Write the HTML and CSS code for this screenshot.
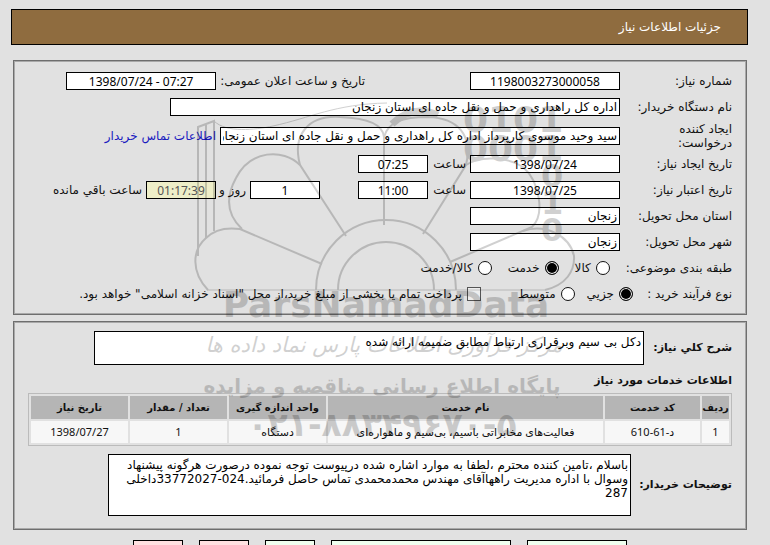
FILE: index.html
```html
<!DOCTYPE html>
<html lang="fa" dir="rtl">
<head>
<meta charset="utf-8">
<title>جزئیات اطلاعات نیاز</title>
<link rel="stylesheet" href="styles.css">
</head>
<body>
<header class="title-bar"><h1>جزئیات اطلاعات نیاز</h1></header>
<main>
<svg class="watermark" viewBox="190 90 390 355" aria-hidden="true">
  <g fill="none" stroke="#000" stroke-width="2">
    <path d="M198 256V127L214 121V231M206 238V125"/>
    <path stroke-width="1" d="M214 121C226 133 255 130 273 126C310 118 335 104 387 103M207 290H545"/>
    <path d="M208 290C191 272 192 250 206 238Q218 226 240 229L322 264"/>
    <path d="M346 236L300 165C283 148 250 150 236 178C224 200 228 216 242 229"/>
    <path d="M300 165C292 135 308 115 340 117C365 118 383 123 384 137V225"/>
    <path d="M384 137C388 122 402 117 428 117C458 118 473 135 466 165L423 234"/>
    <path d="M466 165C480 155 508 157 523 167C540 182 545 215 532 227L450 262"/>
    <path d="M523 231C545 223 570 236 574 256C575 271 566 285 545 290"/>
    <path d="M316 290A70 70 0 0 1 456 290M338 290A48 48 0 0 1 434 290"/>
    <path stroke-width="7" d="M392 124Q412 104 438 115"/>
  </g>
  <g direction="ltr" class="mark-bold">
    <text x="463" y="132" font-size="36">0101</text>
    <text x="463" y="161" font-size="36">0001</text>
    <text x="541" y="187" font-size="32">0</text>
    <text x="541" y="214" font-size="32">1</text>
    <text x="541" y="241" font-size="32">0</text>
    <text x="386" y="317" font-size="36" text-anchor="middle">ParsNamadData</text>
  </g>
  <g direction="rtl" text-anchor="middle">
    <text x="384" y="352" font-size="21" class="mark-script">مرکز فرآوری اطلاعات پارس نماد داده ها</text>
    <text x="382" y="393" font-size="20" class="mark-bold">پایگاه اطلاع رسانی مناقصه و مزایده</text>
    <text x="382" y="436" font-size="33" class="mark-bold" direction="ltr">۰۲۱-۸۸۳۴۹۶۷۰-۵</text>
  </g>
</svg>
<fieldset class="panel need">
  <div class="row"><label class="name" for="num">شماره نیاز:</label><input id="num" class="box wide" value="1198003273000058"><label class="announce" for="ann">تاریخ و ساعت اعلان عمومی:</label><input id="ann" class="box wide" value="1398/07/24 - 07:27" dir="ltr"></div>
  <div class="row"><label class="name" for="org">نام دستگاه خریدار:</label><input id="org" class="box text org" value="اداره کل راهداری و حمل و نقل جاده ای استان زنجان"></div>
  <div class="row tall"><label class="name" for="creator">ایجاد کننده درخواست:</label><input id="creator" class="box text creator" value="سید وحید موسوی کارپرداز اداره کل راهداری و حمل و نقل جاده ای استان زنجان"><a href="#">اطلاعات تماس خریدار</a></div>
  <div class="row"><label class="name" for="cd">تاریخ ایجاد نیاز:</label><input id="cd" class="box wide" value="1398/07/24"><label class="hour" for="ct">ساعت</label><input id="ct" class="box small" value="07:25"></div>
  <div class="row"><label class="name" for="ed">تاریخ اعتبار نیاز:</label><input id="ed" class="box wide" value="1398/07/25"><label class="hour" for="et">ساعت</label><input id="et" class="box small" value="11:00"><input id="days" class="box small days" value="1"><label class="day" for="days">روز و</label><input id="left" class="box small left" value="01:17:39"><label for="left">ساعت باقي مانده</label></div>
  <div class="row"><label class="name" for="prov">استان محل تحویل:</label><input id="prov" class="box text wide" value="زنجان"></div>
  <div class="row"><label class="name" for="city">شهر محل تحویل:</label><input id="city" class="box text wide" value="زنجان"></div>
  <div class="row options"><span class="caption">طبقه بندی موضوعی:</span><label class="choice"><input type="radio" name="kind">کالا</label><label class="choice"><input type="radio" name="kind" checked>خدمت</label><label class="choice"><input type="radio" name="kind">کالا/خدمت</label></div>
  <div class="row options process"><span class="caption">نوع فرآیند خرید :</span><label class="choice"><input type="radio" name="size" checked>جزيي</label><label class="choice"><input type="radio" name="size">متوسط</label><label class="choice treasury"><input type="checkbox">پرداخت تمام یا بخشی از مبلغ خرید،از محل "اسناد خزانه اسلامی" خواهد بود.</label></div>
</fieldset>
<fieldset class="panel details">
  <div class="area-row"><label for="desc">شرح کلي نیاز:</label><textarea id="desc" class="desc">دکل بی سیم وبرقراری ارتباط مطابق ضمیمه ارائه شده</textarea></div>
  <h2>اطلاعات خدمات مورد نیاز</h2>
  <table>
    <colgroup><col class="c1"><col class="c2"><col><col class="c4"><col class="c4"><col class="c4"></colgroup>
    <thead><tr><th>ردیف</th><th>کد خدمت</th><th>نام خدمت</th><th>واحد اندازه گیری</th><th>تعداد / مقدار</th><th>تاریخ نیاز</th></tr></thead>
    <tbody><tr><td>1</td><td>د-61-610</td><td>فعالیت‌های مخابراتی باسیم، بی‌سیم و ماهواره‌ای</td><td>دستگاه</td><td>1</td><td>1398/07/27</td></tr></tbody>
  </table>
  <div class="area-row"><label class="notes-label" for="notes">توضیحات خریدار:</label><textarea id="notes" class="notes">باسلام ،تامین کننده محترم ،لطفا به موارد اشاره شده درپیوست توجه نموده درصورت هرگونه پیشنهاد وسوال با اداره مدیریت راههاآقای مهندس محمدمحمدی تماس حاصل فرمائید.024-33772027داخلی 287</textarea></div>
</fieldset>
<div class="actions"><button class="go"></button><button class="go long"></button><button class="go short"></button><button class="stop"></button><button class="stop"></button></div>
</main>
</body>
</html>
```
FILE: styles.css
```css
* { box-sizing: border-box; }
html { overflow: hidden; }
body { margin: 9px 22px 0 11px; background: #e1e1e1; color: #111; font: 12px/14px "DejaVu Sans", sans-serif; }
input, textarea, button { font: inherit; color: #000; }
.title-bar { height: 36px; border: 1px solid #000; background: #8f6c3f; display: flex; align-items: center; padding: 0 26px; }
h1 { margin: 0; font-size: 12px; font-weight: normal; color: #fff; }
main { position: relative; padding: 15px 1px 0 2px; }
.panel { margin: 0 0 6px; border: 1px solid #6e6e6e; box-shadow: inset 0 0 0 1px #a9a9a9; min-width: 0; }
.need { padding: 7px 14px 8px 9px; }
.row { display: flex; align-items: center; min-height: 26px; white-space: nowrap; gap: 4px; }
.row.tall { min-height: 31px; }
.name { width: 108px; }
.tall .name { white-space: normal; padding-left: 30px; }
.box { height: 18px; border: 1px solid #000; border-radius: 0; background: #fff; padding: 0 2px; text-align: center; min-width: 0; font-family: "Noto Sans", "DejaVu Sans", sans-serif; }
.text { text-align: right; font-family: "DejaVu Sans", sans-serif; }
.wide { width: 150px; }
.org { width: 450px; }
.creator { width: 400px; }
.small { width: 70px; }
.hour { width: 34px; }
.announce { margin-right: 101px; }
.days { margin-right: 34px; }
.day { width: 26px; }
.left { background: #eeeec8; color: #555; }
a { color: #1a1abf; text-decoration: none; }
.options { gap: 16px; }
.process { min-height: 25px; gap: 12px; }
.process .caption { width: 87px; }
.treasury { margin-right: 25px; }
.choice { display: flex; align-items: center; gap: 5px; }
.choice input { appearance: none; width: 14px; height: 14px; margin: 0; background: #fff; border: 1px solid #111; }
.choice input[type="radio"] { border-radius: 50%; }
.choice input:checked { background: #000; box-shadow: inset 0 0 0 1px #fff; }
.choice input[type="checkbox"] { border-color: #555; background: #eee; }
.details { padding: 9px 14px 13px 14px; }
.area-row { display: flex; align-items: center; font-weight: bold; font-size: 11px; }
.area-row label { width: 88px; }
.area-row .notes-label { width: 101px; }
textarea { display: block; resize: none; overflow: hidden; border: 1px solid #000; border-radius: 0; background: #fff; padding: 3px 2px; font-weight: normal; font-size: 12px; }
.desc { width: 550px; height: 34px; }
.notes { width: 523px; height: 62px; }
h2 { margin: 9px 0 5px; font-size: 11px; line-height: 14px; }
table { width: 100%; table-layout: fixed; border: 1px solid #bbb; border-collapse: separate; border-spacing: 2px; text-align: center; margin-bottom: 8px; }
th, td { padding: 0; height: 23px; white-space: nowrap; }
th { background: #b5b5b5; font-size: 10px; }
td { background: #f7f7f7; height: 22px; font-family: "Noto Sans", "DejaVu Sans", sans-serif; font-size: 11px; line-height: 14px; }
.c1 { width: 27px; }
.c2 { width: 95px; }
.c4 { width: 97px; }
.actions { display: flex; gap: 16px; margin-top: 10px; padding-right: 120px; }
button { width: 50px; height: 26px; padding: 0; border: 1px solid #000; border-radius: 0; }
.go { width: 100px; background: #efffef; }
.long { width: 180px; }
.short { width: 50px; }
.stop { background: #ffe1e1; }
.watermark { position: absolute; left: 179px; top: 45px; width: 390px; height: 355px; z-index: 2; opacity: .18; pointer-events: none; overflow: visible; }
.mark-script { font-style: italic; }
.mark-bold { font-weight: bold; }
```
